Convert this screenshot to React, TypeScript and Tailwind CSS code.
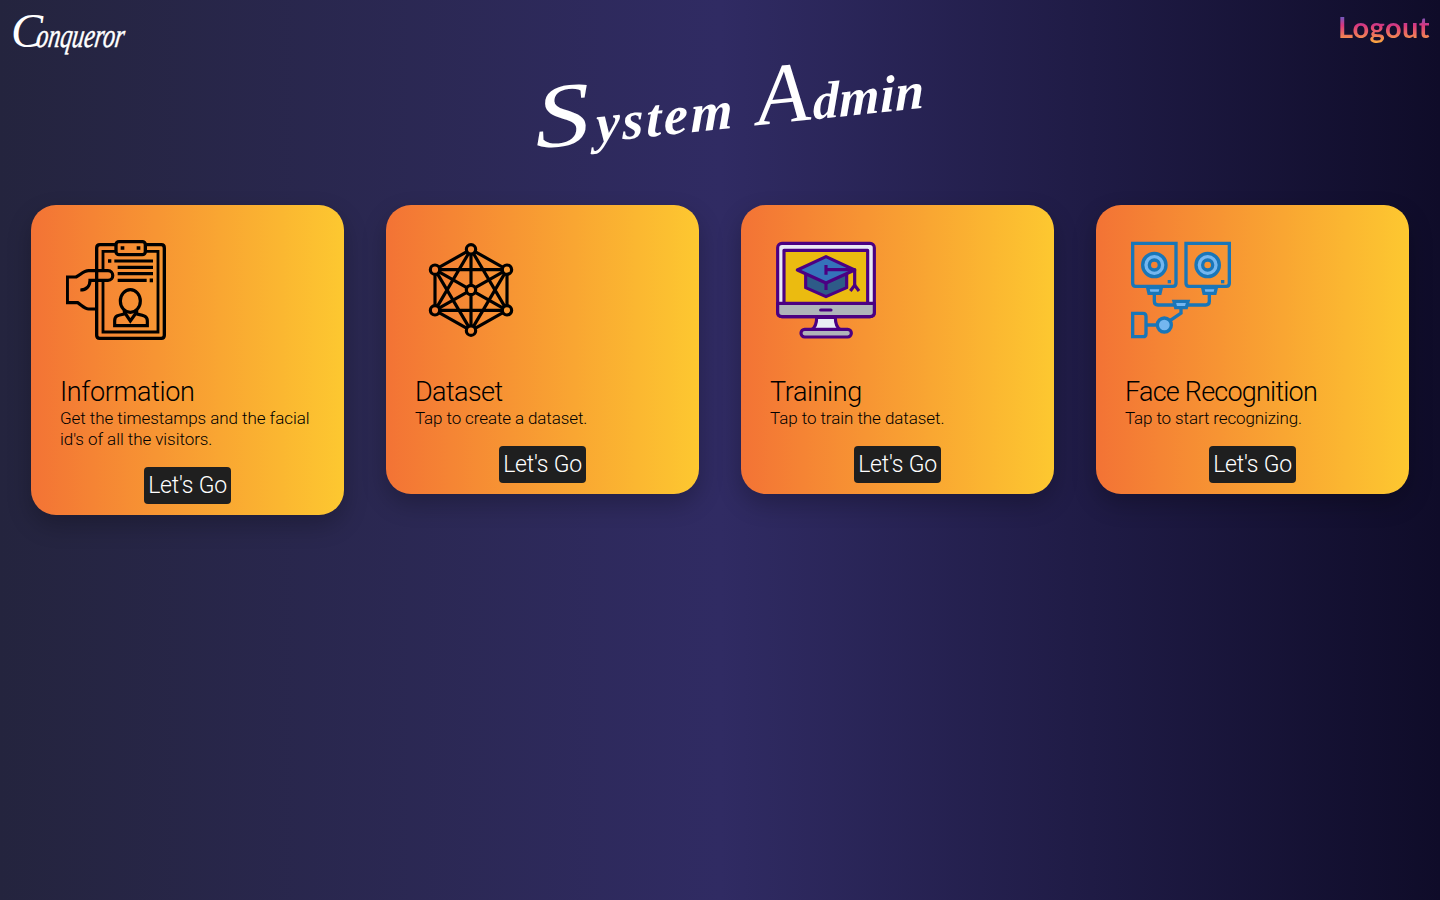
import React from "react";

function InformationIcon() {
  return (
    <svg viewBox="48 30 300 300" className="block size-[100px]" fill="none" stroke="#000" strokeWidth="9.5">
      <path d="M196 44H150Q140 44 140 54V316Q140 325 149 325H334Q343 325 343 316V54Q343 44 334 44H288" strokeWidth="10" />
      <path d="M196 64H159V120M159 152V306H324V64H288" strokeWidth="8.5" />
      <rect x="198" y="35" width="88" height="39" rx="9" strokeWidth="10" />
      <path d="M212 54H223M260 54H271M174 93H184M299 151H309" strokeWidth="11" />
      <path d="M193 93H309M203 112H309M203 131H309M203 151H290" />
      <path d="M140 237H116C105 237 96 227 83 218H52V141H78C92 134 101 122 116 122H174C193 122 193 151 174 151H120C120 168 109 180 91 180" />
      <ellipse cx="241" cy="213" rx="30" ry="34" />
      <path d="M223 241V252C207 255 194 256 194 272V287H292V272C292 256 275 255 260 252V241M225 249L241 273L258 249" />
    </svg>
  );
}

const NODES = [[183, 58], [291, 119], [291, 241], [183, 302], [75, 241], [75, 119], [183, 180]];
const NODE_FILLS = ["#f68b33", "#f89732", "#f89732", "#f68b33", "#f57f34", "#f57f34", "#f68b33"];

function DatasetIcon() {
  return (
    <svg viewBox="33 30 300 300" className="block size-[100px]" stroke="#000" strokeWidth="9.5" fill="none">
      <path d="M183 58L291 119V241L183 302L75 241V119ZM183 58V302M75 119L291 241M291 119L75 241M75 119H291M75 241H291M183 58L75 241M183 58L291 241M183 302L75 119M183 302L291 119" />
      {NODES.map(([x, y], i) => (
        <circle key={`${x}-${y}`} cx={x} cy={y} r="14" fill={NODE_FILLS[i]} />
      ))}
    </svg>
  );
}

function TrainingIcon() {
  return (
    <svg viewBox="48 30 300 300" className="block size-[100px]" stroke="#4b0082" strokeWidth="9.5" strokeLinejoin="round">
      <path d="M170 262C170 280 167 292 155 299H241C229 292 226 280 226 262Z" fill="#e9edf5" />
      <rect x="123" y="298" width="151" height="23" rx="11" fill="#afb4ba" />
      <rect x="53" y="40" width="290" height="220" rx="13" fill="#e9e8f5" />
      <path d="M53 220H343V247Q343 260 330 260H66Q53 260 53 247Z" fill="#afb4ba" />
      <path d="M72 220V61H323V220Z" fill="#ebbb10" />
      <path d="M182 240H213" strokeLinecap="round" />
      <path d="M137 132V173L198 200L260 173V132Z" fill="#2e5b88" />
      <path d="M112 120L198 80L284 120L198 159Z" fill="#3573ba" />
      <path d="M198 105V134M198 119H284V165M198 156V180" fill="none" />
      <path d="M284 163V166L271 183M284 166L297 183" fill="none" />
    </svg>
  );
}

function Speaker({ x, core }: { x: number; core: string }) {
  return (
    <g transform={`translate(${x} 0)`}>
      <path d="M38 40H168V160Q168 169 159 169H47Q38 169 38 160Z" fill="none" />
      <circle cx="103" cy="105" r="35" fill="#74b6f0" />
      <circle cx="103" cy="105" r="15" fill={core} />
      <path d="M143 155H153" strokeWidth="10" />
    </g>
  );
}

function RecognitionIcon() {
  return (
    <svg viewBox="33 30 300 300" className="block size-[100px]" stroke="#1976b8" strokeWidth="10" fill="none">
      <Speaker x={0} core="#f58233" />
      <Speaker x={160} core="#f79232" />
      <path d="M103 193V214Q103 225 114 225H163M268 193V214Q268 225 257 225H204M183 237V249L151 271M80 285H110" />
      <path d="M83 173H124L120 190H87ZM248 173H289L285 190H252ZM162 214H204L199 233H167Z" fill="#74b6f0" />
      <path d="M38 250H69Q78 250 78 259V311Q78 320 69 320H38Z" />
      <circle cx="133" cy="285" r="21" fill="#74b6f0" />
    </svg>
  );
}

type CardProps = {
  icon: React.ReactNode;
  title: string;
  titleClass: string;
  text: string;
  textClass: string;
};

function Card({ icon, title, titleClass, text, textClass }: CardProps) {
  return (
    <article className="flex flex-col rounded-[25px] bg-linear-to-r/srgb from-[#f37335] to-[#fdc830] px-[29px] pt-[35px] pb-[11px] text-black shadow-[0_10px_24px_rgba(0,0,0,0.24)]">
      <div className="pl-1.5">{icon}</div>
      <h2 className={`mt-9 h-8 whitespace-nowrap text-[27px] leading-8 font-light ${titleClass}`}>{title}</h2>
      <p className={`-mr-5 whitespace-pre-line text-[17px] leading-[21px] font-light ${textClass}`}>{text}</p>
      <button className="mt-[17px] h-[37px] w-[87px] self-center rounded bg-[#1f1f1f] text-[23px] leading-[37px] font-light tracking-[-0.2px] whitespace-nowrap text-white">
        Let's Go
      </button>
    </article>
  );
}

export default function App() {
  return (
    <div className="h-[900px] overflow-hidden bg-linear-to-r/srgb from-[#24243e] via-[#302b63] to-[#0f0c29] font-['Roboto',sans-serif]">
      <header className="flex h-[60px] items-start justify-between pt-2.5 pr-2.5 pl-[11px]">
        <div className="-mt-0.5 flex items-baseline font-['Liberation_Serif',serif] leading-[46px] text-white italic">
          <span className="w-[26px] text-[48px]">C</span>
          <span className="origin-left scale-x-[0.7] -skew-x-12 text-[34px] [-webkit-text-stroke:0.5px_white]">onqueror</span>
        </div>
        <a className="bg-linear-to-b/srgb from-[#4568dc] from-10% via-[#d9367f] via-45% to-[#ffb13b] bg-clip-text font-['Lato',sans-serif] text-[29px] leading-[34px] font-bold tracking-[0.4px] text-transparent">
          Logout
        </a>
      </header>
      <h1 className="-mt-3 ml-[534px] h-[100px] w-[392px] -rotate-6 whitespace-nowrap font-['Liberation_Serif',serif] text-[54px] leading-[100px] text-white italic">
        <span className="inline-block w-[60px] origin-left scale-x-[1.22] -skew-x-3 text-[90px]">S</span>
        <span className="inline-block w-[162px] origin-left -skew-x-6 font-bold tracking-[2.8px]">ystem </span>
        <span className="inline-block w-14 text-[86px]">A</span>
        <span className="inline-block w-[114px] origin-left -skew-x-6 text-[52px] font-bold tracking-[0.6px]">dmin</span>
      </h1>
      <main className="mt-[57px] grid grid-cols-4 items-start gap-[42px] px-[31px]">
        <Card
          icon={<InformationIcon />}
          title="Information"
          titleClass="tracking-[-0.35px]"
          text={"Get the timestamps and the facial\nid's of all the visitors."}
          textClass="tracking-[-0.06px]"
        />
        <Card
          icon={<DatasetIcon />}
          title="Dataset"
          titleClass="tracking-[-0.6px]"
          text="Tap to create a dataset."
          textClass="tracking-[-0.11px]"
        />
        <Card
          icon={<TrainingIcon />}
          title="Training"
          titleClass="tracking-[-0.4px]"
          text="Tap to train the dataset."
          textClass="tracking-[-0.06px]"
        />
        <Card
          icon={<RecognitionIcon />}
          title="Face Recognition"
          titleClass="tracking-[-0.78px]"
          text="Tap to start recognizing."
          textClass="tracking-[-0.12px]"
        />
      </main>
    </div>
  );
}
